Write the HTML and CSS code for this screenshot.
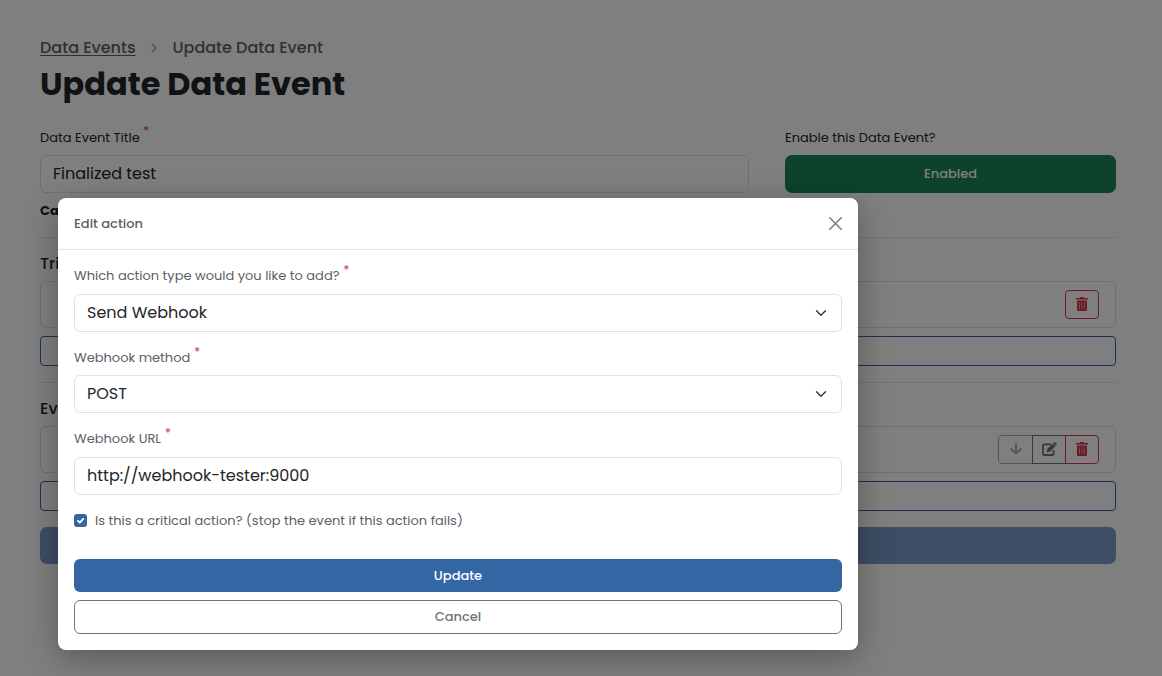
FILE: index.html
```html
<!DOCTYPE html>
<html lang="en">
<head>
<meta charset="utf-8">
<title>Update Data Event</title>
<link rel="stylesheet" href="styles.css">
</head>
<body>
<svg class="symbols" aria-hidden="true">
  <symbol id="trash" viewBox="0 0 12 14"><path d="M4 1V.5Q4 0 4.5 0h3Q8 0 8 .5V1h4v1.5H0V1zM1 3.5h10V13q0 1-1 1H2q-1 0-1-1z" fill="currentColor"/><path d="M3.5 5.2v7M6 5.2v7m2.5-7v7" class="slots"/></symbol>
  <symbol id="chevron" viewBox="0 0 16 16"><path d="m2 5 6 6 6-6" fill="none" stroke="#343a40" stroke-width="2" stroke-linecap="round" stroke-linejoin="round"/></symbol>
</svg>
<main class="page">
  <nav class="breadcrumb">
    <a href="#" class="crumb-link">Data Events</a>
    <svg class="crumb-arrow" viewBox="0 0 6 10"><path d="m.8.8 4.2 4.2-4.2 4.2" fill="none" stroke="#7c838a" stroke-width="1.1"/></svg>
    <span class="crumb-current">Update Data Event</span>
  </nav>
  <h1 class="title">Update Data Event</h1>
  <div class="top-fields">
    <div>
      <label class="label page-label"><span>Data Event Title</span><span class="required">*</span></label>
      <div class="input"><span>Finalized test</span></div>
    </div>
    <div>
      <label class="label page-label"><span>Enable this Data Event?</span></label>
      <button class="enabled">Enabled</button>
    </div>
  </div>
  <div class="category">Ca</div>
  <section class="section">
    <h2 class="heading">Tri</h2>
    <div class="item"><div class="tools"><button class="tool danger"><svg class="trash"><use href="#trash"/></svg></button></div></div>
    <button class="add"></button>
  </section>
  <section class="section">
    <h2 class="heading">Ev</h2>
    <div class="item"><div class="tools">
      <button class="tool muted"><svg class="arrow" viewBox="0 0 12 12"><path d="M6 1v9.5M1.3 6 6 10.7 10.7 6" fill="none" stroke="currentColor" stroke-width="1.9" stroke-linecap="round" stroke-linejoin="round"/></svg></button>
      <button class="tool edit"><svg class="pencil" viewBox="0 0 15 14"><path d="M8.2 2.4H2.1Q1 2.4 1 3.5v8.4Q1 13 2.1 13h8.4q1.1 0 1.1-1.1V8.8" fill="none" stroke="currentColor" stroke-width="1.8" stroke-linecap="round"/><path d="m4.6 10.4.8-3.6 5.3-5.3 2.8 2.8L8.2 9.6zM11.2 1.1l.7-.7q.7-.7 1.4 0l1.3 1.3q.7.7 0 1.4l-.7.7z" fill="currentColor"/></svg></button>
      <button class="tool danger"><svg class="trash"><use href="#trash"/></svg></button>
    </div></div>
    <button class="add"></button>
  </section>
  <button class="save"></button>
</main>
<div class="backdrop">
  <div class="modal" role="dialog">
    <header class="modal-head">
      <span class="modal-title">Edit action</span>
      <svg class="close" viewBox="0 0 13 13"><path d="m.8.8 11.4 11.4M12.2.8.8 12.2" fill="none" stroke="#7f7f7f" stroke-width="1.6" stroke-linecap="round"/></svg>
    </header>
    <div class="modal-body">
      <div class="field"><label class="label"><span>Which action type would you like to add?</span><span class="required">*</span></label>
        <div class="input"><span>Send Webhook</span><svg class="chevron"><use href="#chevron"/></svg></div></div>
      <div class="field method"><label class="label"><span>Webhook method</span><span class="required">*</span></label>
        <div class="input"><span>POST</span><svg class="chevron"><use href="#chevron"/></svg></div></div>
      <div class="field url"><label class="label"><span>Webhook URL</span><span class="required">*</span></label>
        <div class="input"><span>http://webhook-tester:9000</span></div></div>
      <label class="check"><span class="box"><svg class="tick" viewBox="0 0 13 13"><path d="m4 6.8 1.8 1.8 3.5-3.7" fill="none" stroke="#fff" stroke-width="1.8" stroke-linecap="round" stroke-linejoin="round"/></svg></span><span>Is this a critical action? (stop the event if this action fails)</span></label>
      <button class="update">Update</button>
      <button class="cancel">Cancel</button>
    </div>
  </div>
</div>
</body>
</html>
```
FILE: styles.css
```css
* { box-sizing: border-box; }
body { margin: 0; height: 676px; overflow: hidden; background: #fff; color: #212529; font: 13px/20px Poppins, Inter, sans-serif; }
button { font: inherit; font-weight: 500; padding: 0; display: block; }
svg { display: block; flex: none; }
span { white-space: nowrap; }
.symbols { position: absolute; width: 0; height: 0; }
.slots { fill: none; stroke: #fff; stroke-opacity: .65; stroke-width: .8; }

.page { padding: 36px 46px 0 40px; }
.breadcrumb { display: flex; align-items: center; height: 24px; font-size: 16px; font-weight: 500; color: #5c6066; }
.crumb-link { color: inherit; text-underline-offset: 2px; }
.crumb-arrow { width: 6px; height: 10px; margin: 0 15.5px 0 15.5px; }
.title { margin: 4px 0 0; height: 41px; font-size: 32px; line-height: 40px; font-weight: 700; white-space: nowrap; }
.top-fields { display: grid; grid-template-columns: 709px 331px; gap: 36px; margin-top: 23px; }
.label { display: flex; height: 28px; line-height: 20px; color: #5c6064; }
.page-label { height: 27px; color: #212529; }
.required { color: #dc3545; font-size: 12px; line-height: 12px; margin: -2px 0 0 4px; }
.page-label .required { margin: -3px 0 0 3.5px; }
.input { display: flex; align-items: center; justify-content: space-between; height: 38px; padding: 0 12px; border: 1px solid #dee2e6; border-radius: 6px; background: #fff; color: #212529; font-size: 16px; }
.enabled { width: 100%; height: 38px; border: 0; border-radius: 7px; background: #198754; color: #fff; }
.category { height: 45px; padding-top: 8px; font-weight: 700; border-bottom: 1px solid #e5e5e5; }
.section { height: 145px; padding-top: 14px; border-bottom: 1px solid #e5e5e5; }
.section + .section { border: 0; height: 144px; }
.heading { height: 24px; margin: 0 0 5px; font-size: 16px; line-height: 24px; font-weight: 500; }
.item { display: flex; align-items: center; justify-content: flex-end; height: 47px; padding-right: 16px; border: 1px solid #dedede; border-radius: 6px; }
.tools { display: flex; }
.tool { display: flex; align-items: center; justify-content: center; width: 34px; height: 29px; padding-bottom: 1px; border: 1px solid; background: none; }
.tool + .tool { margin-left: -1px; }
.tool:first-child { border-radius: 4px 0 0 4px; }
.tool:last-child { border-radius: 0 4px 4px 0; }
.tool:only-child { border-radius: 4px; }
.danger { color: #dc3545; }
.edit { color: #6c757d; }
.muted { color: #a7acb1; width: 35px; }
.trash { width: 12px; height: 14px; }
.pencil { width: 15px; height: 14px; }
.arrow { width: 12px; height: 12px; }
.add { width: 100%; height: 30px; margin-top: 8px; border: 1px solid #3466a4; border-radius: 4px; background: none; }
.save { width: 100%; height: 37px; border: 0; border-radius: 7px; background: #7b9bc9; }

.backdrop { position: absolute; inset: 0; padding: 198px 0 0 58px; background: rgba(0,0,0,.5); }
.modal { width: 800px; height: 452px; background: #fff; border-radius: 8px; box-shadow: 0 8px 32px rgba(0,0,0,.3); color: #5c6064; }
.modal-head { display: flex; align-items: center; justify-content: space-between; height: 52px; padding: 0 16px; border-bottom: 1px solid #e1e3e5; }
.modal-title { font-weight: 500; }
.close { width: 13px; height: 13px; }
.modal-body { padding: 16px 16px 0; }
.field { height: 82px; }
.method { height: 81px; }
.method .label { height: 27px; }
.url { height: 81.5px; }
.chevron { width: 12px; height: 12px; margin-right: 2px; }
.check { display: flex; align-items: center; height: 20px; }
.box { width: 13px; height: 13px; margin-right: 8px; border-radius: 3px; background: #3466a4; }
.tick { width: 13px; height: 13px; }
.update { width: 100%; height: 33px; margin-top: 28.5px; padding-top: 1px; border: 0; border-radius: 6px; background: #3466a4; color: #fff; }
.cancel { width: 100%; height: 34px; margin-top: 8px; border: 1px solid #6c757d; border-radius: 6px; background: #fff; color: #6c757d; }
```
